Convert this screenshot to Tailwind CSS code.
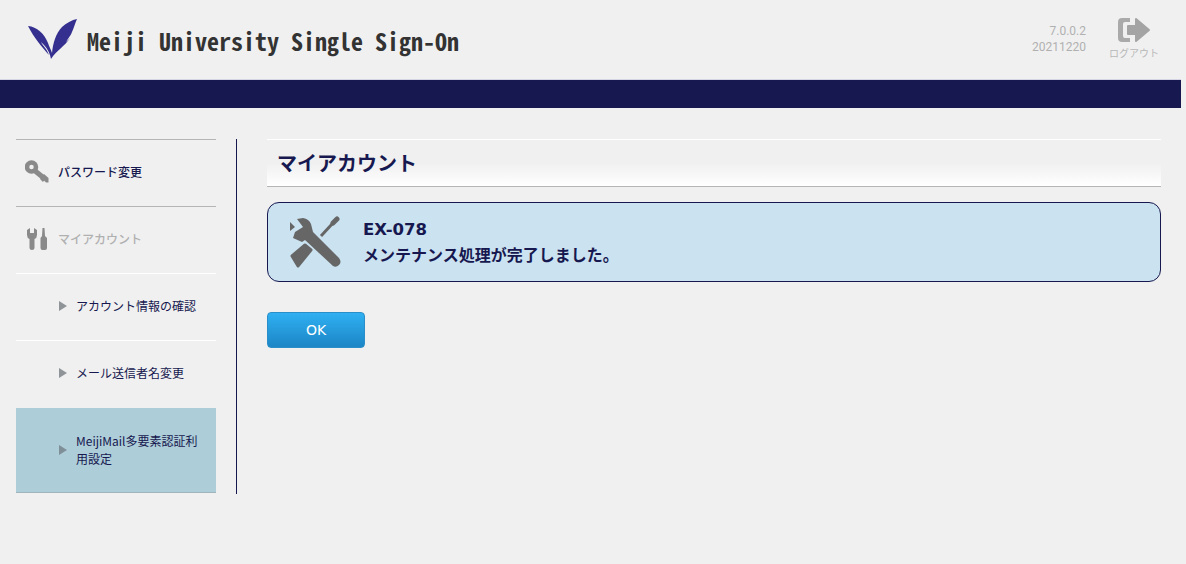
<!DOCTYPE html>
<html lang="ja">
	<head>
		<meta charset="utf-8">
		<title>Meiji University Single Sign-On</title>
		<script src="https://cdn.jsdelivr.net/npm/@tailwindcss/browser@4"></script>
	</head>
	<body class="bg-[#f0f0f0] h-[564px] overflow-hidden font-['Noto_Sans_CJK_JP',sans-serif]">
		<header class="w-[1181px] h-[80px] flex items-start border-b border-[#d4d4e4]">
			<svg class="ml-[28px] mt-[19px] w-[49px] h-[41px]" viewBox="0 0 49 41">
				<path fill="#35308f" d="M0 7 C9 8 16 14 20 24 C21 27 23 31 24 34 C25 24 28 14 34 8 C38 4 44 1 49 0 C47 4 46 9 44 13 C43 16 41 18 38 23 C40 21 41 20 42 19 C37 27 29 31 23 40 C22 35 20 30 16 26 C15 25 14 24 13 23 C15 27 19 30 21 36 C14 28 6 19 0 7 Z"/>
			</svg>
			<h1 class="ml-[10px] mt-[25px] text-[24px] leading-[32px] font-bold text-[#333333] font-['Noto_Sans_Mono_CJK_JP','DejaVu_Sans_Mono',monospace]">Meiji University Single Sign-On</h1>
			<div class="ml-auto mt-[23px] text-right text-[12px] leading-[16px] text-[#b0b0b0] font-['Roboto',sans-serif]">
				<p>7.0.0.2</p>
				<p>20211220</p>
			</div>
			<div class="w-[50px] ml-[23px] mr-[22px] mt-[17px] flex flex-col items-center">
				<svg class="w-[33px] h-[26px]" viewBox="0 0 33 26">
					<path fill="#aaaaaa" d="M4 1 H12 V5 H7 Q5 5 5 7 V19 Q5 21 7 21 H12 V25 H4 Q0 25 0 21 V5 Q0 1 4 1 Z"/>
					<path fill="#a4a4a4" stroke="#a4a4a4" stroke-width="2" stroke-linejoin="round" d="M10 9 H18 V2 L31 13 L18 24 V17 H10 Z"/>
				</svg>
				<span class="mt-[3px] text-[10px] leading-[14px] text-[#b8b8b8] whitespace-nowrap">ログアウト</span>
			</div>
		</header>
		<div class="w-[1181px] h-[28px] bg-[#16184f]"></div>
		<div class="flex pt-[31px] pl-[16px]">
			<nav class="w-[200px] text-[12px] text-[#16184f]">
				<a class="h-[67px] flex items-center border-t border-[#b5b5b5] pl-[9px] pb-[2px] font-medium">
					<svg class="w-[24px] h-[24px]" viewBox="0 0 24 24">
						<circle cx="6.500" cy="7" r="4.500" fill="none" stroke="#8a8a8a" stroke-width="4.500"/>
						<path fill="none" stroke="#8a8a8a" stroke-width="5" d="M9 10 L20 19"/>
						<path fill="#8a8a8a" d="M15 19 L18 22 L19 20.500 L21 22.500 L23.500 22.500 V18 L19 14 Z"/>
					</svg>
					<span class="ml-[9px]">パスワード変更</span>
				</a>
				<a class="h-[67px] flex items-center border-t border-[#b5b5b5] pl-[11px] pb-[2px] text-[#b0b0b0] font-medium">
					<svg class="w-[20px] h-[22px]" viewBox="0 0 20 22">
						<path fill="#8a8a8a" d="M0 2 L3 0 V5 H7 V0 L10 2 V7 Q10 10 7.500 11 V20 Q7.500 22 5 22 Q2.500 22 2.500 20 V11 Q0 10 0 7 Z"/>
						<path fill="#8a8a8a" d="M15.500 0 H17.500 L18 8 L20 10 V20 Q20 22 18 22 H15.500 Q13.500 22 13.500 20 V10 L15 8 Z"/>
					</svg>
					<span class="ml-[11px]">マイアカウント</span>
				</a>
				<a class="h-[67px] flex items-center border-t border-white pl-[43px] pb-[2px]">
					<span class="w-0 h-0 border-y-[5px] border-y-transparent border-l-[8px] border-l-[#8f9498]"></span>
					<span class="ml-[9px]">アカウント情報の確認</span>
				</a>
				<a class="h-[68px] flex items-center border-t border-white pl-[43px] pb-[3px]">
					<span class="w-0 h-0 border-y-[5px] border-y-transparent border-l-[8px] border-l-[#8f9498]"></span>
					<span class="ml-[9px]">メール送信者名変更</span>
				</a>
				<a class="h-[85px] flex items-center bg-[#adcdd9] border-b border-[#a0b4bc] pl-[43px]">
					<span class="w-0 h-0 shrink-0 border-y-[5px] border-y-transparent border-l-[8px] border-l-[#7f8f98]"></span>
					<span class="ml-[9px] leading-[18px]">MeijiMail多要素認証利<br>用設定</span>
				</a>
			</nav>
			<div class="w-px h-[355px] ml-[20px] bg-[#16184f]"></div>
			<main class="w-[894px] ml-[30px]">
				<h2 class="h-[48px] pl-[10px] flex items-center border-t border-white border-b-[#b5b5b5] border-b bg-gradient-to-b from-[#f0f0f0] from-50% to-white text-[20px] font-bold text-[#16184f]">マイアカウント</h2>
				<div class="mt-[15px] h-[80px] flex items-center rounded-[12px] border border-[#16184f] bg-[#cbe2f0] pl-[21px]">
					<svg class="w-[52px] h-[52px]" viewBox="0 0 52 52">
						<path fill="#666666" d="M8 3 L14 2 Q20 3 22 8 L24 16 L50 42 Q53 46 50 49 Q47 52 44 50 L16 24 L13 26 L4 22 L6 16 L14 11 Z"/>
						<path fill="#666666" d="M1 6 L6 11 L1 15 Z"/>
						<path fill="none" stroke="#666666" stroke-width="3" d="M32 20 L44 7"/>
						<path fill="none" stroke="#666666" stroke-width="5" stroke-linecap="round" d="M44 7 L48 3"/>
						<path fill="#666666" stroke="#666666" stroke-width="3" stroke-linejoin="round" d="M3 40 L16 29 L22 34 L9 50 Z"/>
					</svg>
					<div class="ml-[22px] -mt-[1px] text-[#16184f] font-bold">
						<p class="text-[16.500px] leading-[25px] font-['DejaVu_Sans',sans-serif]">EX-078</p>
						<p class="text-[16px] leading-[25px]">メンテナンス処理が完了しました。</p>
					</div>
				</div>
				<button class="mt-[30px] block w-[98px] h-[36px] rounded-[4px] border border-[#2a8fc8] bg-gradient-to-b from-[#2fb0f2] to-[#1c86c6] text-[14px] text-white font-['DejaVu_Sans',sans-serif]">OK</button>
			</main>
		</div>
	</body>
</html>
